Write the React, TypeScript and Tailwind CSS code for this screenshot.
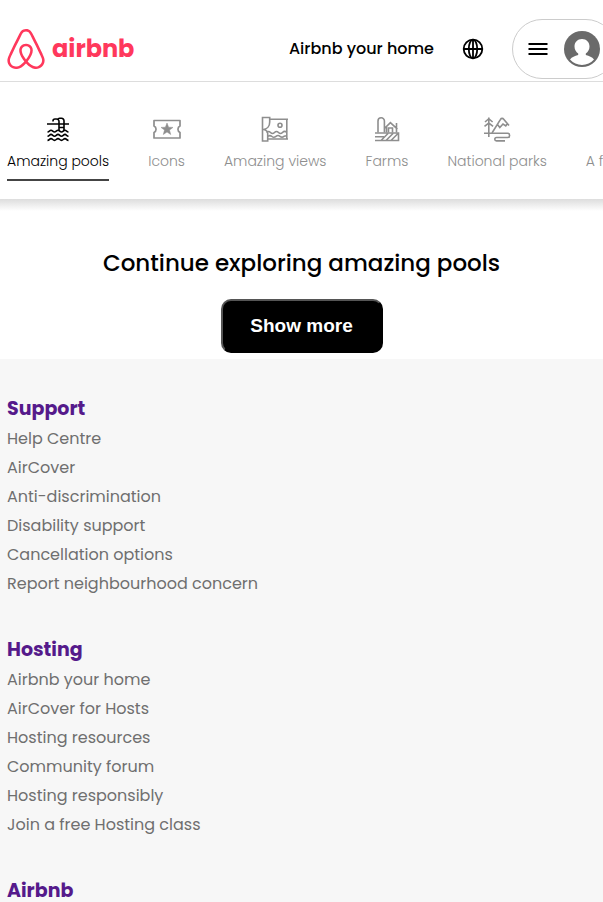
import type { ReactNode } from "react";
import { SiAirbnb } from "react-icons/si";

function PoolIcon() {
  return (
    <svg width="24" height="26" viewBox="0 0 24 26" fill="none" stroke="currentColor" strokeWidth="1.600" aria-hidden="true">
      <path d="M1 8h22M7 5.500V5a2 2 0 0 1 2-2h1.500a2.500 2.500 0 0 1 2.500 2.500V15M11.500 3.500A2.500 2.500 0 0 1 14 2.300h1.500A2.500 2.500 0 0 1 18 5V15M13 11.500h5" />
      <path d="M1.500 16c2 0 2-1.800 3.500-1.800s2 1.800 3.500 1.800 2-1.800 3.500-1.800 2 1.800 3.500 1.800 2-1.800 3.500-1.800 1.500 1.800 3.500 1.800" />
      <path d="M1.500 20.200c2 0 2-1.800 3.500-1.800s2 1.800 3.500 1.800 2-1.800 3.500-1.800 2 1.800 3.500 1.800 2-1.800 3.500-1.800 1.500 1.800 3.500 1.800" />
      <path d="M1.500 24.400c2 0 2-1.800 3.500-1.800s2 1.800 3.500 1.800 2-1.800 3.500-1.800 2 1.800 3.500 1.800 2-1.800 3.500-1.800 1.500 1.800 3.500 1.800" />
    </svg>
  );
}

function TicketIcon() {
  return (
    <svg width="28" height="26" viewBox="0 0 28 26" fill="none" stroke="currentColor" strokeWidth="1.700" aria-hidden="true">
      <path d="M1 4.500h26V10a3.600 3.600 0 0 0 0 6.500V22H1v-5.500A3.600 3.600 0 0 0 1 10z" strokeLinejoin="round" />
      <path d="m14 7 1.600 4.200 4.400.2-3.500 2.700 1.200 4.400-3.700-2.500-3.700 2.500 1.200-4.400L8 11.400l4.400-.2z" fill="currentColor" stroke="currentColor" strokeWidth="0.500" />
    </svg>
  );
}

function ViewsIcon() {
  return (
    <svg width="28" height="26" viewBox="0 0 28 26" fill="none" stroke="currentColor" strokeWidth="1.600" aria-hidden="true">
      <path d="M1.500 1.500h7.200V6c0 4-2.500 7-6 7.500H1.500zM1.500 13.500h1.200c2.500.5 4 2 4 4V25H1.500z" />
      <path d="M8.700 3.300H27M25.800 3.300v20M6.700 23H27" />
      <circle cx="19" cy="9.300" r="2" />
      <path d="M5.500 16.500c1.500-1.500 2.500-1.500 4 0s2.500 1.500 4 0 2.500-1.500 4 0 2.500 1.500 4 0 3-1.200 4.300-.2M7 20.300c1.500-1.200 2.500-1 4 .2s2.500 1 4-.2 2.500-1.200 4 0 2.500 1.200 4 0l2.800-.6" />
    </svg>
  );
}

function FarmIcon() {
  return (
    <svg width="26" height="26" viewBox="0 0 26 26" fill="none" stroke="currentColor" strokeWidth="1.600" aria-hidden="true">
      <path d="M4 16.500V5a3.200 3.200 0 0 1 6.400 0v11.500M10.400 12.500l6-5.800 7 6.500M12.500 11v5.500M22.500 7v9.500M14.500 16.500V12h4v4.500" />
      <path d="M1 17h23.500v7.500H1M1 20.800h9M7 24.500l7-7M12 24.500l7-7M17 24.500l7-7" />
    </svg>
  );
}

function ParkIcon() {
  return (
    <svg width="28" height="26" viewBox="0 0 28 26" fill="none" stroke="currentColor" strokeWidth="1.600" aria-hidden="true">
      <path d="M5.800 1.500V21M2 6l3.800-3.300L9.600 6M1.500 10.300l4.300-3.300 4.300 3.300" />
      <path d="m9 17 8.500-13.700c.7-1.200 2.500-1.200 3.200 0L26 9.500M14.500 8.500l2.300 3 3.200-3.500 2.800 1.800 1.700-2.300" />
      <path d="M1 17.300h23.500a2 2 0 0 1 0 4.200H13.500a1.700 1.700 0 0 0 0 3.400h8.500" />
    </svg>
  );
}

function GlobeIcon() {
  return (
    <svg width="22" height="22" viewBox="0 0 22 22" fill="none" stroke="currentColor" strokeWidth="1.800" aria-hidden="true">
      <circle cx="11" cy="11" r="9.300" />
      <ellipse cx="11" cy="11" rx="4.200" ry="9.300" />
      <path d="M1.500 11h19M11 1.500v19" />
    </svg>
  );
}

function Avatar() {
  return (
    <svg width="36" height="36" viewBox="0 0 36 36" className="shrink-0" aria-hidden="true">
      <circle cx="18" cy="18" r="18" fill="#6a6a6a" />
      <path d="M18 8c-4.500 0-7.500 3.200-7.500 7.500 0 3 1.500 5.500 3.700 7v1.500c-3.500.9-6.200 2-8.200 4.500a16 16 0 0 0 24 0c-2-2.500-4.700-3.600-8.200-4.500v-1.500c2.200-1.500 3.700-4 3.700-7C25.500 11.200 22.500 8 18 8z" fill="#fff" />
    </svg>
  );
}

const categories: { label: string; icon: ReactNode }[] = [
  { label: "Amazing pools", icon: <PoolIcon /> },
  { label: "Icons", icon: <TicketIcon /> },
  { label: "Amazing views", icon: <ViewsIcon /> },
  { label: "Farms", icon: <FarmIcon /> },
  { label: "National parks", icon: <ParkIcon /> },
];

const sections: { title: string; links: string[] }[] = [
  {
    title: "Support",
    links: ["Help Centre", "AirCover", "Anti-discrimination", "Disability support", "Cancellation options", "Report neighbourhood concern"],
  },
  {
    title: "Hosting",
    links: ["Airbnb your home", "AirCover for Hosts", "Hosting resources", "Community forum", "Hosting responsibly", "Join a free Hosting class"],
  },
  { title: "Airbnb", links: [] },
];

export default function App() {
  return (
    <div className="h-screen overflow-hidden bg-white font-['Poppins','Inter',sans-serif] text-black">
      <header className="flex h-[82px] items-center overflow-hidden border-b border-[#dddddd] pt-4 pl-[7px]">
        <a href="#" aria-label="airbnb" className="flex shrink-0 items-center gap-[7px] text-[#ff385c]">
          <SiAirbnb className="-mx-px size-10" aria-hidden="true" />
          <span className="text-[24px] leading-8 font-bold">airbnb</span>
        </a>
        <div className="-mr-[13px] ml-auto flex shrink-0 items-center">
          <a href="#" className="text-base leading-6 font-medium">Airbnb your home</a>
          <button type="button" aria-label="Language" className="mx-7"><GlobeIcon /></button>
          <button type="button" aria-label="Account menu" className="flex h-[60px] w-[104px] items-center justify-between rounded-full border border-[#cccccc] px-[15px]">
            <svg width="20" height="20" viewBox="0 0 20 20" stroke="currentColor" strokeWidth="2" className="shrink-0" aria-hidden="true">
              <path d="M0.500 5h19M0.500 10h19M0.500 15h19" />
            </svg>
            <Avatar />
          </button>
        </div>
      </header>

      <nav className="flex h-[117px] gap-[39px] overflow-hidden pt-[34px] pl-[7px]">
        {categories.map((c, i) => (
          <a
            key={c.label}
            href="#"
            className={
              i === 0
                ? "flex h-[65px] shrink-0 flex-col items-center border-b-2 border-[#444444] text-black"
                : "flex h-[65px] shrink-0 flex-col items-center text-[#8e8e8e]"
            }
          >
            {c.icon}
            <span className="mt-[9px] text-sm leading-5 font-light whitespace-nowrap">{c.label}</span>
          </a>
        ))}
        <a href="#" className="flex h-[65px] shrink-0 flex-col pt-[35px] text-[#8e8e8e]">
          <span className="text-sm leading-5 font-light whitespace-nowrap">A f</span>
        </a>
      </nav>

      <div className="h-3 bg-linear-to-b from-[#dddddd] to-white" />

      <main className="flex flex-col items-center pt-9 pb-1.5">
        <h1 className="text-[23px] leading-8 font-medium">Continue exploring amazing pools</h1>
        <button type="button" className="mt-5 h-[54px] w-[162px] rounded-[10px] border-2 border-black border-t-[#555555] border-l-[#555555] bg-black font-['Liberation_Sans',Arial,sans-serif] text-[19px] font-bold text-white">
          Show more
        </button>
      </main>

      <footer className="flex flex-col gap-9 bg-[#f7f7f7] px-[7px] pt-[34px]">
        {sections.map((s) => (
          <section key={s.title}>
            <h2 className="text-[19px] leading-[31px] font-bold text-[#551a8b]"><a href="#">{s.title}</a></h2>
            <ul>
              {s.links.map((l) => (
                <li key={l} className="text-base leading-[29px] text-[#6f6f6f]"><a href="#">{l}</a></li>
              ))}
            </ul>
          </section>
        ))}
      </footer>
    </div>
  );
}
